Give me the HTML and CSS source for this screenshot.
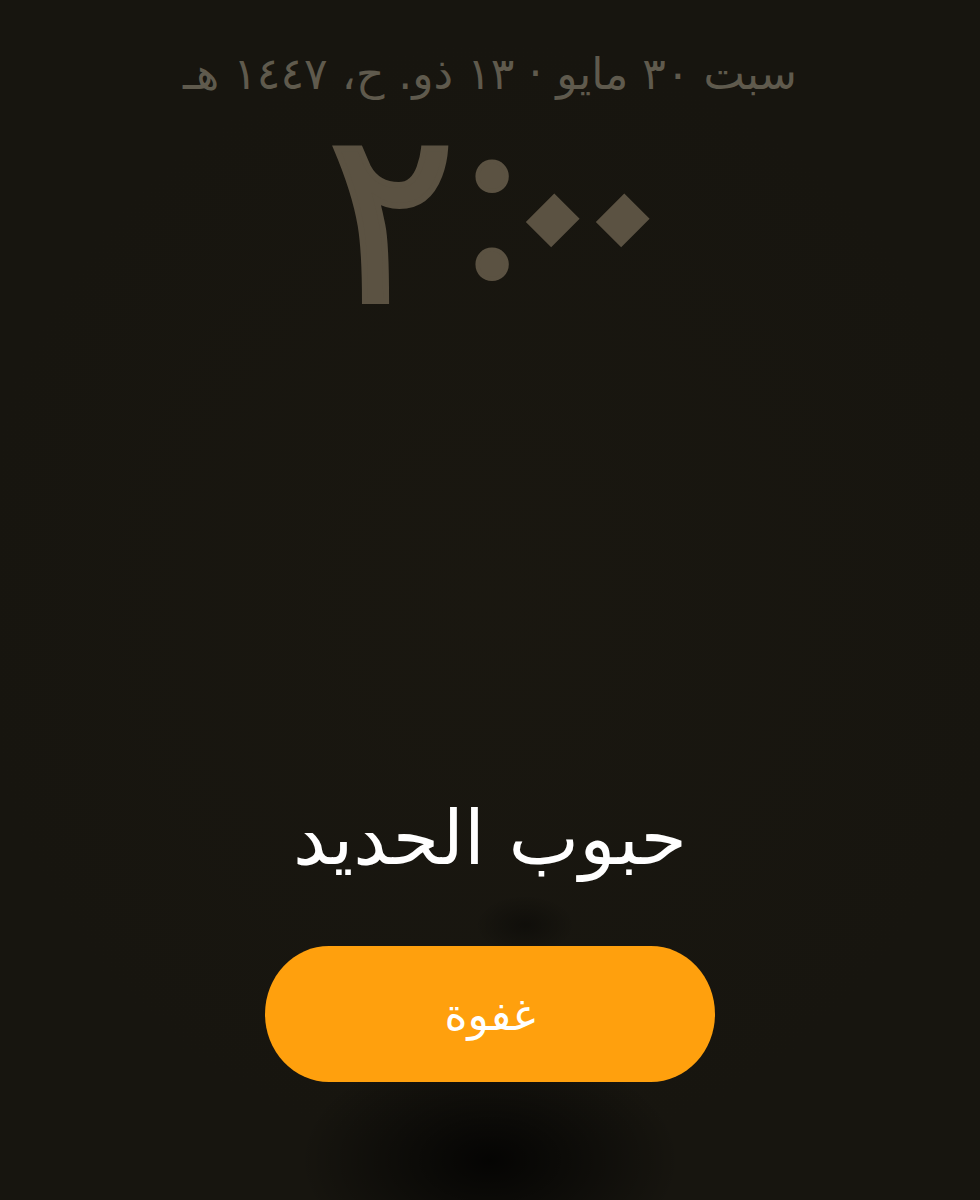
FILE: index.html
```html
<!DOCTYPE html>
<html lang="ar" dir="rtl">
<head>
<meta charset="utf-8">
<title>منبه</title>
<link rel="stylesheet" href="styles.css">
</head>
<body>
<main class="screen">
  <header class="top">
    <p class="date">سبت ٣٠ مايو · ١٣ ذو. ح، ١٤٤٧ هـ</p>
    <p class="clock" dir="ltr"><span class="hour">٢</span><span class="colon">:</span><span class="zero">٠</span><span class="zero">٠</span></p>
  </header>
  <section class="alarm">
    <h1 class="label">حبوب الحديد</h1>
    <button class="snooze" type="button">غفوة</button>
  </section>
</main>
</body>
</html>
```
FILE: styles.css
```css
html, body {
  margin: 0;
  padding: 0;
}
body {
  width: 980px;
  height: 1200px;
  overflow: hidden;
  background-color: #17150f;
  background-image:
    radial-gradient(ellipse 190px 115px at 490px 1160px, rgba(0,0,0,0.8), rgba(0,0,0,0) 100%),
    radial-gradient(ellipse 50px 30px at 525px 925px, rgba(0,0,0,0.35), rgba(0,0,0,0) 100%),
    radial-gradient(ellipse 520px 560px at 490px 600px, rgba(28,25,17,0.5), rgba(0,0,0,0) 100%);
  font-family: "DejaVu Sans", "Noto Sans", sans-serif;
}
.screen {
  height: 1200px;
  display: flex;
  flex-direction: column;
  align-items: center;
}
.top {
  display: flex;
  flex-direction: column;
  align-items: center;
}
.date {
  margin: 44px 0 0;
  font-size: 44px;
  line-height: 60px;
  color: #5f5a4d;
  white-space: nowrap;
}
.clock {
  margin: 11px 0 0 18px;
  font-size: 250px;
  line-height: 190px;
  color: #5b5242;
  white-space: nowrap;
}
.hour {
  display: inline-block;
  font-size: 240px;
  -webkit-text-stroke: 6px #5b5242;
}
.colon {
  display: inline-block;
  font-family: "Lato", sans-serif;
  font-size: 235px;
  -webkit-text-stroke: 4px #5b5242;
  margin: 0 9px 0 7px;
  transform: translateY(-24px);
}
.zero {
  display: inline-block;
  -webkit-text-stroke: 3px #5b5242;
  margin: 0 -32px;
  transform-origin: 50% 95px;
  transform: translateY(-8px) rotate(45deg) scale(1.2);
}
.alarm {
  margin-top: auto;
  margin-bottom: 118px;
  display: flex;
  flex-direction: column;
  align-items: center;
}
.label {
  margin: 0 0 60px;
  font-size: 75px;
  line-height: 96px;
  font-weight: 400;
  color: #ffffff;
}
.snooze {
  width: 450px;
  height: 136px;
  border: 0;
  border-radius: 64px / 68px;
  background: #ffa00d;
  color: #ffffff;
  font-family: inherit;
  font-size: 44px;
  padding: 0;
}
```
